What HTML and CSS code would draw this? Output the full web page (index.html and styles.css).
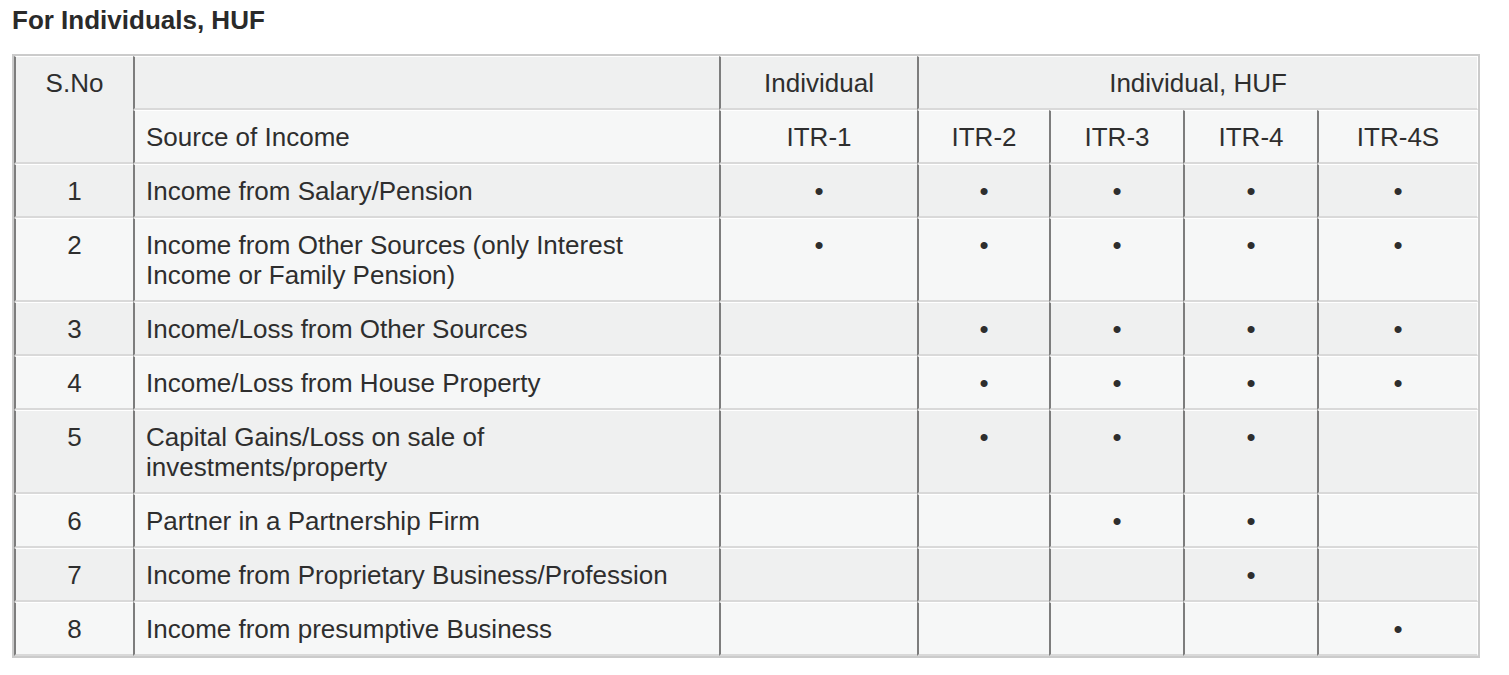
FILE: index.html
```html
<!DOCTYPE html>
<html>
<head>
<meta charset="utf-8">
<link rel="stylesheet" href="styles.css">
</head>
<body>
<h2 class="title">For Individuals, HUF</h2>
<table class="itr">
  <colgroup>
    <col class="c-sno">
    <col class="c-src">
    <col class="c-itr1">
    <col class="c-itr2">
    <col class="c-itr3">
    <col class="c-itr4">
    <col class="c-itr4s">
  </colgroup>
  <tbody>
    <tr class="odd">
      <td class="ctr" rowspan="2">S.No</td>
      <td></td>
      <td class="ctr">Individual</td>
      <td class="ctr" colspan="4">Individual, HUF</td>
    </tr>
    <tr class="even">
      <td>Source of Income</td>
      <td class="ctr">ITR-1</td>
      <td class="ctr">ITR-2</td>
      <td class="ctr">ITR-3</td>
      <td class="ctr">ITR-4</td>
      <td class="ctr">ITR-4S</td>
    </tr>
    <tr class="odd">
      <td class="ctr">1</td>
      <td>Income from Salary/Pension</td>
      <td class="ctr">•</td><td class="ctr">•</td><td class="ctr">•</td><td class="ctr">•</td><td class="ctr">•</td>
    </tr>
    <tr class="even">
      <td class="ctr">2</td>
      <td>Income from Other Sources (only Interest Income or Family Pension)</td>
      <td class="ctr">•</td><td class="ctr">•</td><td class="ctr">•</td><td class="ctr">•</td><td class="ctr">•</td>
    </tr>
    <tr class="odd">
      <td class="ctr">3</td>
      <td>Income/Loss from Other Sources</td>
      <td class="ctr"></td><td class="ctr">•</td><td class="ctr">•</td><td class="ctr">•</td><td class="ctr">•</td>
    </tr>
    <tr class="even">
      <td class="ctr">4</td>
      <td>Income/Loss from House Property</td>
      <td class="ctr"></td><td class="ctr">•</td><td class="ctr">•</td><td class="ctr">•</td><td class="ctr">•</td>
    </tr>
    <tr class="odd">
      <td class="ctr">5</td>
      <td>Capital Gains/Loss on sale of investments/property</td>
      <td class="ctr"></td><td class="ctr">•</td><td class="ctr">•</td><td class="ctr">•</td><td class="ctr"></td>
    </tr>
    <tr class="even">
      <td class="ctr">6</td>
      <td>Partner in a Partnership Firm</td>
      <td class="ctr"></td><td class="ctr"></td><td class="ctr">•</td><td class="ctr">•</td><td class="ctr"></td>
    </tr>
    <tr class="odd">
      <td class="ctr">7</td>
      <td>Income from Proprietary Business/Profession</td>
      <td class="ctr"></td><td class="ctr"></td><td class="ctr"></td><td class="ctr">•</td><td class="ctr"></td>
    </tr>
    <tr class="even">
      <td class="ctr">8</td>
      <td>Income from presumptive Business</td>
      <td class="ctr"></td><td class="ctr"></td><td class="ctr"></td><td class="ctr"></td><td class="ctr">•</td>
    </tr>
  </tbody>
</table>
</body>
</html>
```

FILE: styles.css
```css
html, body {
  margin: 0;
  padding: 0;
  background: #ffffff;
}

body {
  padding: 5px 12px 0 12px;
  font-family: "Liberation Sans", Arial, Helvetica, sans-serif;
  color: #2e2e2e;
}

.title {
  margin: 0;
  font-size: 26px;
  font-weight: bold;
  line-height: 30px;
  color: #2a2a2a;
}

.itr {
  margin-top: 19px;
  width: 1468px;
  table-layout: fixed;
  border-collapse: separate;
  border-spacing: 0;
  border: 2px solid #cbcbcb;
  font-size: 26px;
  line-height: 30px;
}

.c-sno { width: 119px; }
.c-src { width: 586px; }
.c-itr1 { width: 198px; }
.c-itr2 { width: 132px; }
.c-itr3 { width: 134px; }
.c-itr4 { width: 134px; }
.c-itr4s { width: 161px; }

.itr td {
  vertical-align: top;
  padding: 11px 12px 10px 11px;
  border-left: 2px solid #7d7d7d;
  border-top: 1px solid #ffffff;
  border-bottom: 2px solid #d9d9d9;
  color: #2e2e2e;
}

.itr td:last-child {
  border-right: 1px solid #ffffff;
}

.itr .ctr {
  text-align: center;
  padding-left: 10px;
  padding-right: 10px;
}

.odd td {
  background: #eff0f0;
}

.even td {
  background: #f6f7f7;
}
```
